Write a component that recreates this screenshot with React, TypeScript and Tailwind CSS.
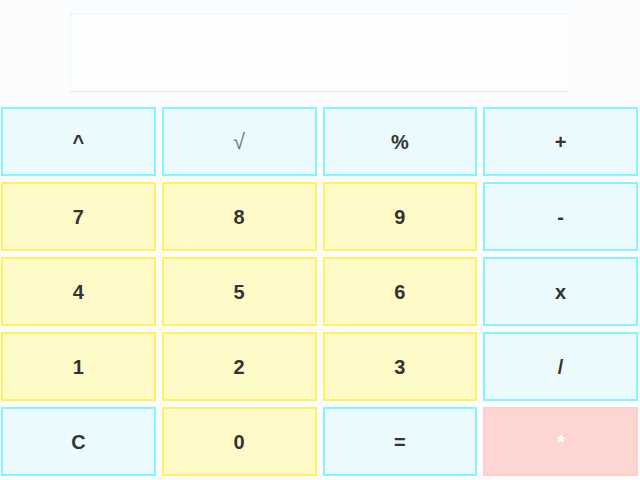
import React from "react";

type Kind = "op" | "num" | "del";

const keys: { label: string; kind: Kind; light?: boolean }[] = [
  { label: "^", kind: "op" },
  { label: "√", kind: "op", light: true },
  { label: "%", kind: "op" },
  { label: "+", kind: "op" },
  { label: "7", kind: "num" },
  { label: "8", kind: "num" },
  { label: "9", kind: "num" },
  { label: "-", kind: "op" },
  { label: "4", kind: "num" },
  { label: "5", kind: "num" },
  { label: "6", kind: "num" },
  { label: "x", kind: "op" },
  { label: "1", kind: "num" },
  { label: "2", kind: "num" },
  { label: "3", kind: "num" },
  { label: "/", kind: "op" },
  { label: "C", kind: "op" },
  { label: "0", kind: "num" },
  { label: "=", kind: "op" },
  { label: "*", kind: "del" },
];

function Key({ label, kind, light }: { label: string; kind: Kind; light?: boolean }) {
  const base =
    "h-[69px] flex items-center justify-center text-[20px] font-bold font-['Liberation_Sans',Arial,sans-serif] border-2";
  let cls = "";
  if (kind === "op") cls = "bg-[#ebfbfd] border-[#86f3ff] text-[#333333]";
  else if (kind === "num") cls = "bg-[#fffbc8] border-[#fff25a] text-[#333333]";
  else cls = "bg-[#fdd6d2] border-[#fdd0cc] text-white";
  return (
    <div className={`${base} ${cls}`}>
      {light ? (
        <span className="font-normal text-[22px] text-[#6a7f8a]">{label}</span>
      ) : (
        label
      )}
    </div>
  );
}

export default function App() {
  return (
    <div className="w-[640px] h-[480px] bg-[#fbfcfd] overflow-hidden">
      <div className="pt-[13px] flex justify-center">
        <div className="w-[500px] h-[79px] bg-[#fdfdfe] border border-dotted border-t-[#c8f6fb] border-l-[#c8f6fb] border-r-[#eef0f4] border-b-[#dcd8f4]" />
      </div>
      <div className="mt-[15px] pl-[1px] pr-[2px] grid grid-cols-4 gap-x-[6px] gap-y-[6px]">
        {keys.map((k) => (
          <Key key={k.label} {...k} />
        ))}
      </div>
    </div>
  );
}
